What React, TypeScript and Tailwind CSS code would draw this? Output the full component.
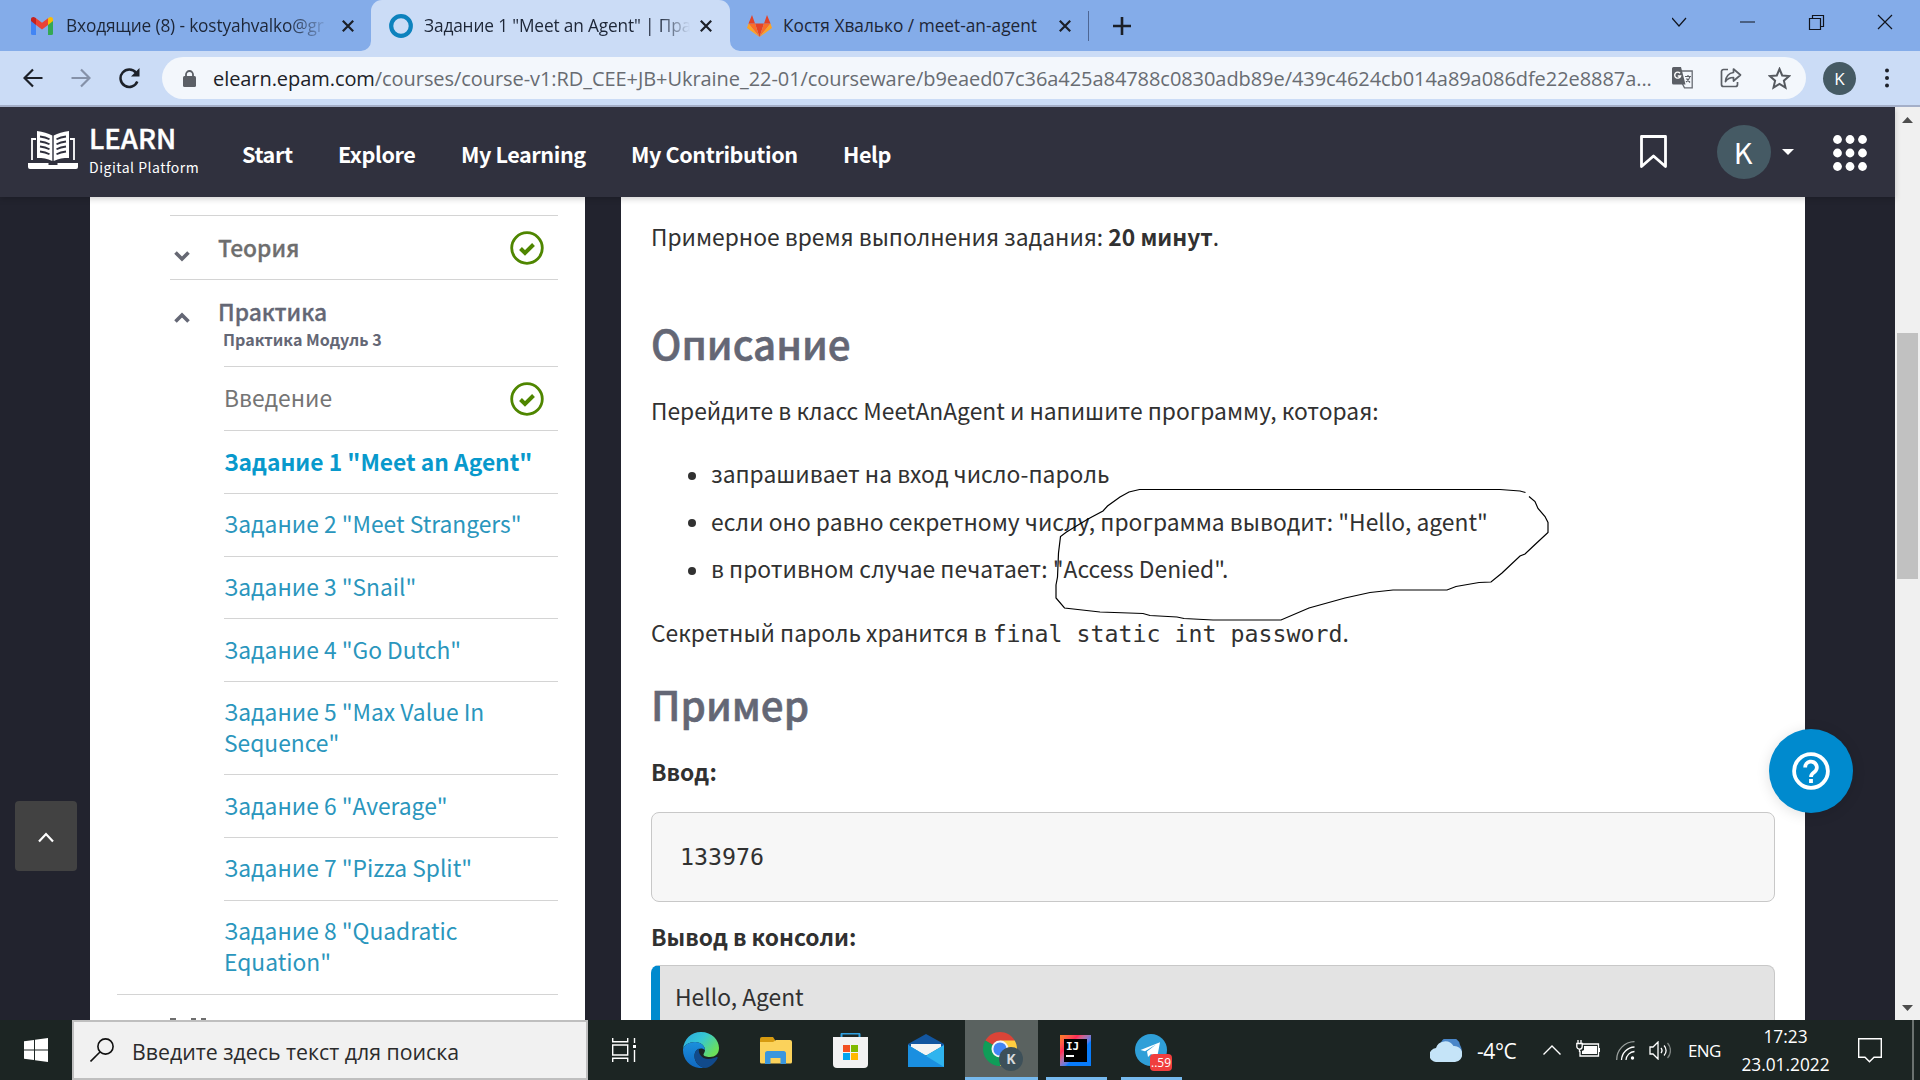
import type { ReactNode } from "react";

function GmailIcon() {
  return (
    <svg className="w-[22px] h-[18px]" viewBox="0 0 22 18" fill="none">
      <path d="M0 3v13.5A1.500 1.500 0 0 0 1.500 18H5V7z" fill="#4285f4" />
      <path d="M22 3v13.500a1.500 1.500 0 0 1-1.500 1.500H17V7z" fill="#34a853" />
      <path d="M17 1.500V8l5-4V2.200C22 .3 19.600-.7 18 .6z" fill="#fbbc04" />
      <path d="M5 8V1.200l6 4.600 6-4.600V8l-6 4.600z" fill="#ea4335" />
      <path d="M0 2.200V4l5 4V1.200L4 .6C2.400-.7 0 .3 0 2.200z" fill="#c5221f" />
    </svg>
  );
}

function GitlabIcon() {
  return (
    <svg className="w-[25px] h-[22px]" viewBox="0 0 25 22">
      <path d="M12.500 22 17 8.500H8z" fill="#e24329" />
      <path d="M12.500 22 8 8.500H1.500zM12.500 22 17 8.500h6.500z" fill="#fc6d26" />
      <path d="M1.500 8.500 0 13l12.500 9zM23.500 8.500 25 13l-12.500 9z" fill="#fca326" />
      <path d="M1.500 8.500H8L5 0zM23.500 8.500H17L20 0z" fill="#e24329" />
    </svg>
  );
}

function Cross() {
  return (
    <svg className="w-3 h-3 shrink-0" viewBox="0 0 12 12" stroke="#1b1f27" strokeWidth="2.200">
      <path d="M.8.8l10.400 10.400M11.200.8.8 11.200" />
    </svg>
  );
}

function TabStrip() {
  return (
    <div className="flex h-[51px] bg-[#84ace9] text-[17.3px] leading-[50px] text-[#1d2637]">
      <div className="flex w-[371px] items-center pl-[31px]">
        <GmailIcon />
        <span className="ml-[13px] w-[264px] overflow-hidden whitespace-nowrap bg-linear-to-r from-[#1d2637] from-84% to-transparent to-100% bg-clip-text tracking-[-0.15px] text-transparent">
          Входящие (8) - kostyahvalko@gr
        </span>
        <span className="ml-[12px]"><Cross /></span>
      </div>
      <div className="relative flex w-[359px] items-center rounded-t-[11px] bg-[#cbdcf6] pl-[18px]">
        <svg className="absolute -left-[10px] bottom-0 h-[10px] w-[10px]" viewBox="0 0 10 10"><path d="M10 0v10H0A10 10 0 0 0 10 0" fill="#cbdcf6" /></svg>
        <svg className="absolute -right-[10px] bottom-0 h-[10px] w-[10px]" viewBox="0 0 10 10"><path d="M0 0v10h10A10 10 0 0 1 0 0" fill="#cbdcf6" /></svg>
        <svg className="h-6 w-6" viewBox="0 0 24 24"><circle cx="12" cy="12" r="9.800" fill="none" stroke="#0d82bd" strokeWidth="4.200" /></svg>
        <span className="ml-[11px] w-[266px] overflow-hidden whitespace-nowrap bg-linear-to-r from-[#1d2637] from-88% to-transparent bg-clip-text tracking-[-0.15px] text-transparent">
          Задание 1 "Meet an Agent" | Пра
        </span>
        <span className="ml-[10px]"><Cross /></span>
      </div>
      <div className="flex flex-1 items-center pl-[17px]">
        <GitlabIcon />
        <span className="ml-[11px] w-[264px] whitespace-nowrap">Костя Хвалько / meet-an-agent</span>
        <span className="ml-[12px]"><Cross /></span>
        <div className="ml-[17px] h-[30px] w-px bg-[#4d6694]" />
        <svg className="ml-[24px] h-[18px] w-[18px]" viewBox="0 0 18 18" stroke="#1b1f27" strokeWidth="2.600"><path d="M9 0v18M0 9h18" /></svg>
      </div>
      <div className="flex h-[43px] w-[248px] items-center" >
        <svg className="h-4 w-full" viewBox="0 0 248 16" fill="none" stroke="#10141d" strokeWidth="1.200">
          <path d="M0 4l7 8 7-8M68 8h15" />
          <path d="M137.500 4.500h11v11h-11zM140.500 4V1.500h11v11h-3" />
          <path d="M206 1l14 14M220 1l-14 14" />
        </svg>
      </div>
    </div>
  );
}

function Toolbar() {
  return (
    <div className="flex h-14 items-center border-b-2 border-[#a4afc8] bg-[#cbdcf6] pl-[23px]">
      <svg className="h-5 w-5" viewBox="0 0 20 20" fill="none" stroke="#1d2129" strokeWidth="2.200"><path d="M19.500 10H2M10 1.500 1.500 10l8.500 8.500" /></svg>
      <svg className="ml-[28px] h-5 w-5" viewBox="0 0 20 20" fill="none" stroke="#8591a8" strokeWidth="2.200"><path d="M.5 10H18M10 1.500l8.500 8.500-8.500 8.500" /></svg>
      <svg className="ml-[28px] h-[21px] w-[21px]" viewBox="0 0 21 21" fill="none" stroke="#1d2129" strokeWidth="2.500">
        <path d="M18.300 13.500A8.700 8.700 0 1 1 17 4.800" />
        <path d="M20.500 0v8.500H12z" fill="#1d2129" stroke="none" />
      </svg>
      <div className="ml-[22px] flex h-[42px] w-[1644px] items-center rounded-full bg-[#f3f7fc] pl-[21px]">
        <svg className="h-[17px] w-[13px]" viewBox="0 0 13 17"><rect y="6" width="13" height="11" rx="1.500" fill="#5b5f66" /><path d="M3 7V4.500a3.500 3.500 0 0 1 7 0V7" fill="none" stroke="#5b5f66" strokeWidth="1.800" /></svg>
        <span className="ml-[17px] w-[1470px] whitespace-nowrap pt-px text-[20px] leading-[42px] tracking-[-0.065px] text-[#686c72]">
          <span className="text-[#202227]">elearn.epam.com</span>
          /courses/course-v1:RD_CEE+JB+Ukraine_22-01/courseware/b9eaed07c36a425a84788c0830adb89e/439c4624cb014a89a086dfe22e8887a...
        </span>
        <svg className="-ml-[11px] h-[22px] w-[22px] shrink-0" viewBox="0 0 22 22">
          <path d="M9 4h11.200v16.800H12.500L9 14z" fill="#f3f7fc" stroke="#676b72" strokeWidth="1.300" />
          <path d="M1.500 0H9l4.500 17.500h-12A1.500 1.500 0 0 1 0 16V1.500A1.500 1.500 0 0 1 1.500 0z" fill="#5b5f66" />
          <path d="M8 6.200A3 3 0 1 0 8.600 9H5.800" fill="none" stroke="#fff" strokeWidth="1.400" />
          <path d="M13 9.500h6M16 8v1.500M18 9.500c-.5 2.500-2 4-4 5.500M14.500 11.500l3.500 4" fill="none" stroke="#5b5f66" strokeWidth="1.200" />
        </svg>
        <svg className="ml-[26px] h-[22px] w-[22px] shrink-0" viewBox="0 0 22 22" fill="none" stroke="#5b5f66" strokeWidth="1.700">
          <path d="M8 2.500H3.500a2 2 0 0 0-2 2v13a2 2 0 0 0 2 2h12a2 2 0 0 0 2-2V15" />
          <path d="M13.500 2l7 6-7 6v-3.500c-3.500 0-6 1-8 4 .5-5 3.500-8.500 8-9z" strokeLinejoin="round" />
        </svg>
        <svg className="ml-[26px] h-[23px] w-[23px] shrink-0" viewBox="0 0 23 23" fill="none" stroke="#55595f" strokeWidth="2"><path d="M11.500 2l2.700 6.500 7 .6-5.300 4.600 1.600 6.900-6-3.700-6 3.700 1.600-6.900L1.800 9.100l7-.6z" /></svg>
      </div>
      <div className="ml-[17px] h-[33px] w-[33px] rounded-full bg-[#455a64] text-center text-[17px] leading-[33px] text-white">K</div>
      <svg className="ml-[29px] h-5 w-1" viewBox="0 0 4 20" fill="#1d2129"><circle cx="2" cy="2.500" r="2" /><circle cx="2" cy="10" r="2" /><circle cx="2" cy="17.500" r="2" /></svg>
    </div>
  );
}

function SiteHeader() {
  return (
    <header className="relative z-10 flex h-[90px] items-center bg-[#30313e] pl-7 font-bold text-white shadow-[0_2px_6px_rgba(0,0,0,0.18)]">
      <svg className="-mt-1 h-[38px] w-[50px]" viewBox="0 0 50 38">
        <path d="M0 32h20.500v2h9v-2H50v4a2 2 0 0 1-2 2H2a2 2 0 0 1-2-2z" fill="#fff" />
        <path d="M4 29V8h4M46 29V8h-4" fill="none" stroke="#fff" strokeWidth="1.800" />
        <path d="M9 0c6 1 11 2 15.300 4.500v25.500C19 27.500 15 27 9 27zM41 0c-6 1-11 2-15.300 4.500v25.500C31 27.500 35 27 41 27z" fill="#fff" />
        <path d="M12 5.500c4 .5 7 1.500 9.500 2.800M12 10.500c4 .5 7 1.500 9.500 2.800M12 15.500c4 .5 7 1.500 9.500 2.800M12 20.500c4 .5 7 1.500 9.500 2.800M38 5.500c-4 .5-7 1.500-9.500 2.800M38 10.500c-4 .5-7 1.500-9.500 2.800M38 15.500c-4 .5-7 1.500-9.500 2.800M38 20.500c-4 .5-7 1.500-9.500 2.800" fill="none" stroke="#30313e" strokeWidth="1.800" />
      </svg>
      <div className="ml-[11px] -mt-1 w-[153px]">
        <div className="text-[27.500px] font-medium leading-[34px] [-webkit-text-stroke:0.4px_#fff]">LEARN</div>
        <div className="text-[14px] font-normal leading-[26px] tracking-[0.5px]">Digital Platform</div>
      </div>
      <nav className="flex h-9 w-[1398px] items-center pt-1 text-[21.600px] leading-[36px] tracking-[-0.42px]">
        <span className="w-24">Start</span>
        <span className="w-[123px]">Explore</span>
        <span className="w-[170px]">My Learning</span>
        <span className="w-[212px]">My Contribution</span>
        <span>Help</span>
      </nav>
      <svg className="h-[37px] w-[27px] -mt-px" viewBox="0 0 27 37" fill="none" stroke="#fff" strokeWidth="2.800"><path d="M1.500 3.500h24v30L13.500 23 1.500 33.500z" strokeLinejoin="round" /></svg>
      <div className="ml-[50px] h-[54px] w-[54px] rounded-full bg-[#455a64] pr-0.5 text-center text-[29px] font-normal leading-[52px]">K</div>
      <svg className="ml-[11px] h-[6px] w-3" viewBox="0 0 12 6"><path d="M0 0h12L6 6z" fill="#fff" /></svg>
      <svg className="ml-[39px] mt-0.5 h-9 w-[34px]" viewBox="0 0 34 36" fill="#fff">
        {[4.5, 18, 31.5].map((y) => [4.500, 17, 29.500].map((x) => <circle key={`${x}-${y}`} cx={x} cy={y} r="4.400" />))}
      </svg>
    </header>
  );
}

function Check() {
  return (
    <svg className="h-[34px] w-[34px]" viewBox="0 0 34 34" fill="none" stroke="#4f8600">
      <circle cx="17" cy="17" r="15.300" strokeWidth="2.800" />
      <path d="M10.500 17.500l4.500 4.500 8.500-8.500" strokeWidth="4" />
    </svg>
  );
}

const tasks: { label: ReactNode; cls: string }[] = [
  { label: 'Задание 1 "Meet an Agent"', cls: "h-[63px] pt-[15px] font-bold text-[#0899cc]" },
  { label: 'Задание 2 "Meet Strangers"', cls: "h-[63px] pt-[14px]" },
  { label: 'Задание 3 "Snail"', cls: "h-[62px] pt-[14px]" },
  { label: 'Задание 4 "Go Dutch"', cls: "h-[63px] pt-[15px]" },
  { label: <>Задание 5 "Max Value In<br />Sequence"</>, cls: "h-[93px] pt-[14px]" },
  { label: 'Задание 6 "Average"', cls: "h-[63px] pt-[15px]" },
  { label: 'Задание 7 "Pizza Split"', cls: "h-[63px] pt-[14px]" },
  { label: <>Задание 8 "Quadratic<br />Equation"</>, cls: "h-[94px] pt-[14px]" },
];

function Sidebar() {
  return (
    <aside className="w-[495px] shrink-0 bg-white pt-[18px] pl-[27px] pr-[27px] text-[22.800px] leading-[31px]">
      <div className="ml-[53px]">
        <div className="flex h-16 items-center border-t border-[#d4d4d4] font-medium text-[#6e6e6e]">
          <svg className="ml-1 mt-[16px] h-3 w-4" viewBox="0 0 16 12" fill="none" stroke="#666873" strokeWidth="3.600"><path d="M1.500 2.500 8 9l6.500-6.500" /></svg>
          <span className="ml-[28px] flex-1 [-webkit-text-stroke:0.3px_#6e6e6e]">Теория</span>
          <span className="mr-[14px] flex"><Check /></span>
        </div>
        <div className="flex h-[87px] border-t border-[#d4d4d4] font-medium text-[#646775]">
          <svg className="ml-1 mt-[32px] h-3 w-4" viewBox="0 0 16 12" fill="none" stroke="#646775" strokeWidth="3.600"><path d="M1.500 9.500 8 3l6.500 6.500" /></svg>
          <div className="ml-[28px] pt-[16px]">
            <div className="[-webkit-text-stroke:0.3px_#646775]">Практика</div>
            <div className="pl-[5px] text-[16.100px] font-bold leading-6">Практика Модуль 3</div>
          </div>
        </div>
      </div>
      <div className="ml-[107px] text-[#2a96bd]">
        <div className="flex h-16 items-center border-t border-[#d4d4d4] text-[#757575]">
          <span className="-mt-0.5 flex-1">Введение</span>
          <span className="mr-[14px] flex"><Check /></span>
        </div>
        {tasks.map((t, i) => (
          <div key={i} className={`border-t border-[#d4d4d4] whitespace-nowrap ${t.cls}`}>{t.label}</div>
        ))}
      </div>
      <div className="flex h-[26px] items-end border-t border-[#d4d4d4] pl-[53px]">
        <div className="h-[2px] w-[6px] bg-[#6e6e6e]" />
        <div className="ml-[15px] h-[2px] w-[5px] bg-[#6e6e6e]" />
        <div className="ml-[5px] h-[2px] w-[5px] bg-[#6e6e6e]" />
      </div>
    </aside>
  );
}

function Lesson() {
  return (
    <main className="ml-9 w-[1184px] shrink-0 bg-white pt-[21px] pl-[30px] pr-[30px] text-[22.800px] leading-[38px] text-[#313131]">
      <p>Примерное время выполнения задания: <b>20 минут</b>.</p>
      <h2 className="mt-[62px] text-[40.300px] font-medium leading-[50px] text-[#646775] [-webkit-text-stroke:0.6px_#646775]">Описание</h2>
      <p className="mt-6 tracking-[0.010px]">Перейдите в класс MeetAnAgent и напишите программу, которая:</p>
      <ul className="mt-[20px] leading-[47px]">
        {["запрашивает на вход число-пароль", 'если оно равно секретному числу, программа выводит: "Hello, agent"', 'в противном случае печатает: "Access Denied".'].map((t) => (
          <li key={t} className="flex items-center pl-[37px] h-[47.500px] pt-0 tracking-[0.020px] before:mt-1 before:mr-[15px] before:h-2 before:w-2 before:rounded-full before:bg-[#313131]">{t}</li>
        ))}
      </ul>
      <p className="mt-[21px] h-[38px] whitespace-nowrap">
        Секретный пароль хранится в<span className="ml-[6px] font-['DejaVu_Sans_Mono',monospace] text-[23.250px]">final static int password</span>.
      </p>
      <h2 className="mt-[27px] text-[40.300px] font-medium leading-[50px] text-[#646775] [-webkit-text-stroke:0.6px_#646775]">Пример</h2>
      <p className="mt-[24px] font-bold">Ввод:</p>
      <div className="mt-[21px] flex h-[90px] items-center rounded-lg border border-[#c8c8c8] bg-[#f7f7f7] pl-[28px] font-['DejaVu_Sans_Mono',monospace] text-[23.250px]">133976</div>
      <p className="mt-[16px] font-bold">Вывод в консоли:</p>
      <div className="mt-[9px] h-[90px] overflow-hidden rounded-lg border border-l-[9px] border-[#c8c8c8] border-l-[#008ace] bg-[#e3e3e3] pl-[15px] pt-[12px]">Hello, Agent</div>
    </main>
  );
}

function Scrollbar() {
  return (
    <div className="flex w-[25px] flex-col items-center bg-[#f0f0f0]">
      <svg className="mt-[10px] h-[6px] w-[11px]" viewBox="0 0 11 6"><path d="M0 6h11L5.500 0z" fill="#4d4d4d" /></svg>
      <div className="mt-[210px] h-[246px] w-[21px] bg-[#c1c1c1]" />
      <svg className="mt-auto mb-[9px] h-[6px] w-[11px]" viewBox="0 0 11 6"><path d="M0 0h11L5.500 6z" fill="#4d4d4d" /></svg>
    </div>
  );
}

function Page() {
  return (
    <div className="relative flex h-[913px] overflow-hidden">
      <div className="w-[1895px] bg-[#22232e] font-['Noto_Sans_CJK_SC',sans-serif]">
        <SiteHeader />
        <div className="flex h-[823px] overflow-hidden pl-[90px]">
          <Sidebar />
          <Lesson />
        </div>
      </div>
      <Scrollbar />
      <svg className="absolute left-[1040px] top-[373px] h-[150px] w-[520px]" viewBox="1040 480 520 150" fill="none" stroke="#000" strokeWidth="1.200">
        <path d="M1525.500 492.500 1520 491l-20-1.500h-360.500l-10.500 2.500-9 5-12.500 9-4.500 5-15 8-21.500 13-6 4.500-2 16.500-1 24-1.500 8v13l8.500 10 35.500 4 43 1.500 7 2 27 1.500 7 1.500 29 1.500h68l28-12 36-10 25-5.500 23-2.500h54l9-3.500 23-4 12-.5 11-9 18-17 5-2 9-8.500 14-13v-10l-3-6-7-8-3-7-6-5" />
      </svg>
      <button className="absolute left-[15px] top-[694px] flex h-[70px] w-[62px] items-center justify-center rounded bg-[#424242]">
        <svg className="mt-0.5 h-3 w-4" viewBox="0 0 16 12" fill="none" stroke="#fff" strokeWidth="2.200"><path d="M1 10.500 8 3l7 7.500" /></svg>
      </button>
      <button className="absolute left-[1769px] top-[622px] flex h-[84px] w-[84px] items-center justify-center rounded-full bg-[#008ace] shadow-[0_2px_14px_rgba(0,0,0,0.12)]">
        <svg className="h-[38px] w-[38px]" viewBox="0 0 38 38" fill="none" stroke="#fff" strokeWidth="3.800">
          <circle cx="19" cy="19" r="16.900" />
          <path d="M13.200 15.500a5.800 5.800 0 1 1 8.800 4.800c-2 1.400-3 2.400-3 4.800M19 27v4" />
        </svg>
      </button>
    </div>
  );
}

function Taskbar() {
  return (
    <div className="flex h-[60px] items-center bg-[#1c2523] text-white">
      <svg className="ml-6 h-6 w-6" viewBox="0 0 24 24" fill="#fff"><path d="M0 3.300 10 2v9.500H0zM11 1.800 24 0v11.500H11zM0 12.500h10V22L0 20.700zM11 12.500h13V24l-13-1.800z" /></svg>
      <div className="ml-6 flex h-[60px] w-[516px] items-center border-2 border-[#bfbfbf] bg-[#f1f1f1] pl-4 text-[#2b2b2b]">
        <svg className="h-6 w-6" viewBox="0 0 24 24" fill="none" stroke="#111" strokeWidth="1.600"><circle cx="15.500" cy="8.500" r="7.600" /><path d="M10 14 .5 23.500" /></svg>
        <span className="ml-[18px] whitespace-nowrap pt-1 text-[21.300px]">Введите здесь текст для поиска</span>
      </div>
      <svg className="ml-6 h-6 w-6" viewBox="0 0 24 24" fill="none" stroke="#fff" strokeWidth="1.400"><path d="M.7 0v3.700h15V0M.7 24v-3.700h15V24M.7 7h15v10H.7zM22.500 0v5M22.500 12v12" /><path d="M21 7h3v3h-3z" fill="#fff" stroke="none" /></svg>
      <svg className="ml-[47px] h-9 w-9" viewBox="0 0 36 36">
        <defs>
          <linearGradient id="eg" x1="0" x2="1" y1="0" y2=".6"><stop offset="0" stopColor="#2aa7e0" /><stop offset=".5" stopColor="#36c6d4" /><stop offset="1" stopColor="#6be05a" /></linearGradient>
          <linearGradient id="eb" x1="0" x2="0" y1="0" y2="1"><stop offset="0" stopColor="#1b8fdc" /><stop offset="1" stopColor="#1068c0" /></linearGradient>
        </defs>
        <path d="M0 17C1 7 8 0 18 0c11 0 18 8 18 16 0 6-4 9-9 9-4 0-6.500-1-6.500-2.500 0-1.200 1.500-2 1.500-4.500 0-4-4-8-10-8C6 10 1.500 13 0 17z" fill="url(#eg)" />
        <path d="M0 17c1.500-4 6-7 12-7 6 0 10 4 10 8-1-1-2.500-1.600-4-1.600-4 0-6.500 3-6.500 7.600 0 6 4.500 11 10.500 12C9 37.500 0 29 0 18z" fill="url(#eb)" />
        <path d="M11.500 24c0-4 2-6.500 4.500-7.400-1 4.400 2 10.400 9.500 10.400 3.500 0 6-1 7.500-1.700 1.600-.6 2 .3 1.400 1.200C32 31 27.500 35.500 22 36c-6-1-10.500-6-10.500-12z" fill="#114a8b" />
      </svg>
      <svg className="ml-[41px] h-[27px] w-8" viewBox="0 0 32 27"><path d="M0 2a2 2 0 0 1 2-2h11l2 3v3H0z" fill="#d69a10" /><path d="M0 5h13l3-2h14a2 2 0 0 1 2 2v20a1.500 1.500 0 0 1-1.500 1.500h-29A1.500 1.500 0 0 1 0 25z" fill="#fbd25b" /><path d="M5 27V16.500a2.500 2.500 0 0 1 2.500-2.500h16a2.500 2.500 0 0 1 2.500 2.500V27h-5.500v-6h-10v6z" fill="#3a96dd" /></svg>
      <svg className="ml-[41px] h-[35px] w-[35px]" viewBox="0 0 35 35"><path d="M8.500 6V1.500a1 1 0 0 1 1-1h16a1 1 0 0 1 1 1V6" fill="none" stroke="#2f9fe0" strokeWidth="2" /><path d="M0 4h35v27a4 4 0 0 1-4 4H4a4 4 0 0 1-4-4z" fill="#f2f2f2" /><path d="M10 12h7v7h-7z" fill="#f25022" /><path d="M18 12h7v7h-7z" fill="#7fba00" /><path d="M10 20h7v7h-7z" fill="#00a4ef" /><path d="M18 20h7v7h-7z" fill="#ffb900" /></svg>
      <svg className="ml-10 h-[33px] w-9" viewBox="0 0 36 33"><path d="M0 10 18 0l18 10v5H0z" fill="#1256a0" /><path d="M3 10h30v3L19.500 21h-3L3 13z" fill="#f4f4f4" /><path d="M0 11 18 21.500 36 11v22H0z" fill="#2fb4ee" /><path d="M0 11v22h36z" fill="#1a8fe0" /></svg>
      <div className="relative ml-[21px] flex h-[60px] w-[73px] items-center justify-center border-b-[3px] border-[#76b9ed] bg-[#5a6260]">
        <svg className="-ml-1 h-[34px] w-[34px]" viewBox="0 0 34 34"><path d="M17 17 2.300 8.500A17 17 0 0 1 31.700 8.500z" fill="#db4437" /><path d="M17 17 2.300 8.500A17 17 0 0 0 17 34l7.500-12z" fill="#0f9d58" /><path d="M17 8.500h14.700A17 17 0 0 1 17 34l7.500-12.500z" fill="#ffcd40" /><circle cx="17" cy="17" r="8.500" fill="#f4f4f4" /><circle cx="17" cy="17" r="6.600" fill="#4285f4" /></svg>
        <span className="absolute left-[34px] top-[27px] h-6 w-6 rounded-full bg-[#3d5059] text-center text-[14px] font-bold leading-[23px] text-[#d5dadc]">K</span>
      </div>
      <div className="ml-2 flex h-[60px] w-[61px] justify-center border-b-[3px] border-[#76b9ed] pt-[15px]">
        <div className="-ml-0.5 h-[31px] w-[31px] bg-linear-to-br from-[#fc801d] via-[#fe2857] via-30% to-[#087cfa] to-60% p-[4px]">
          <div className="h-full w-full bg-black pl-0.5 pt-px font-['DejaVu_Sans_Mono',monospace] text-[11px] font-bold leading-[13px]">IJ<div className="mt-[2px] h-[2px] w-2 bg-white" /></div>
        </div>
      </div>
      <div className="relative ml-[14px] flex h-[60px] w-[61px] justify-center border-b-[3px] border-[#76b9ed] pt-[14px]">
        <svg className="-ml-0.5 h-8 w-8" viewBox="0 0 32 32"><circle cx="16" cy="16" r="16" fill="#2f9fd8" /><path d="M5.500 16 25 8.200l-3 16-6-4.200-3 3-1-5.500 9-7-11 6.800z" fill="#fff" /></svg>
        <span className="absolute left-[29px] top-[34px] h-[17px] w-[22px] rounded bg-[#f03e3e] text-center text-[12px] leading-[17px]">..59</span>
      </div>
      <svg className="ml-[248px] h-[23px] w-8" viewBox="0 0 32 23"><path d="M10 8a9 8 0 0 1 20-2c3 4 2 12-1 15z" fill="#4a86c8" /><path d="M7 23a7 7 0 0 1-1-14A9.500 9 0 0 1 23.500 7 8 8 0 0 1 25 23z" fill="#c5e4f8" /></svg>
      <span className="ml-[15px] w-[66px] pt-1 text-[21px] tracking-[-0.4px]">-4°C</span>
      <svg className="h-[10px] w-[18px]" viewBox="0 0 18 10" fill="none" stroke="#fff" strokeWidth="1.400"><path d="M.5 9.500 9 1l8.500 8.500" /></svg>
      <svg className="-mt-1 ml-[15px] h-[17px] w-6" viewBox="0 0 24 17" fill="none" stroke="#fff" strokeWidth="1.300"><path d="M6 4h16.500v12H4v-5M23.500 8v4M2 0v3M5 0v3M.8 3.500h5.400v3a2.700 2.700 0 0 1-5.400 0zM3.500 9v3" /><path d="M8 6h13v8H6v-3l2-1z" fill="#fff" stroke="none" /></svg>
      <svg className="ml-4 h-[19px] w-[19px]" viewBox="0 0 19 19" fill="none" stroke="#fff" strokeWidth="1.300"><path d="M.7 19A18 18 0 0 1 18.500.7" stroke="#9aa09e" /><path d="M5.500 19A13.500 13.500 0 0 1 18.500 6M10 19a9 9 0 0 1 8.500-8.500M14 19" /><circle cx="16.500" cy="17" r="1.700" fill="#fff" stroke="none" /></svg>
      <svg className="ml-[14px] h-[19px] w-[22px]" viewBox="0 0 22 19" fill="none" stroke="#fff" strokeWidth="1.300"><path d="M1 6h3l5-5v17l-5-5H1zM12 7a4 4 0 0 1 0 5M15 4.500a7 7 0 0 1 0 10" /><path d="M18.500 2a11 11 0 0 1 0 15" stroke="#7d8381" /></svg>
      <span className="ml-[17px] w-[50px] pt-0.5 text-[17px] tracking-[-0.6px]">ENG</span>
      <div className="w-[95px] pt-0.5 text-center text-[17.300px] leading-7">17:23<br />23.01.2022</div>
      <svg className="ml-[25px] h-[25px] w-6" viewBox="0 0 24 25" fill="none" stroke="#fff" strokeWidth="1.400"><path d="M.7.7h22.600v18.500H16l-4.500 4.500L7 19.200H.7z" /></svg>
      <div className="ml-auto mr-[6px] h-full w-[2px] bg-[#6b7270]" />
    </div>
  );
}

export default function App() {
  return (
    <div className="h-[1080px] w-[1920px] overflow-hidden font-['Open_Sans',sans-serif]">
      <TabStrip />
      <Toolbar />
      <Page />
      <Taskbar />
    </div>
  );
}
